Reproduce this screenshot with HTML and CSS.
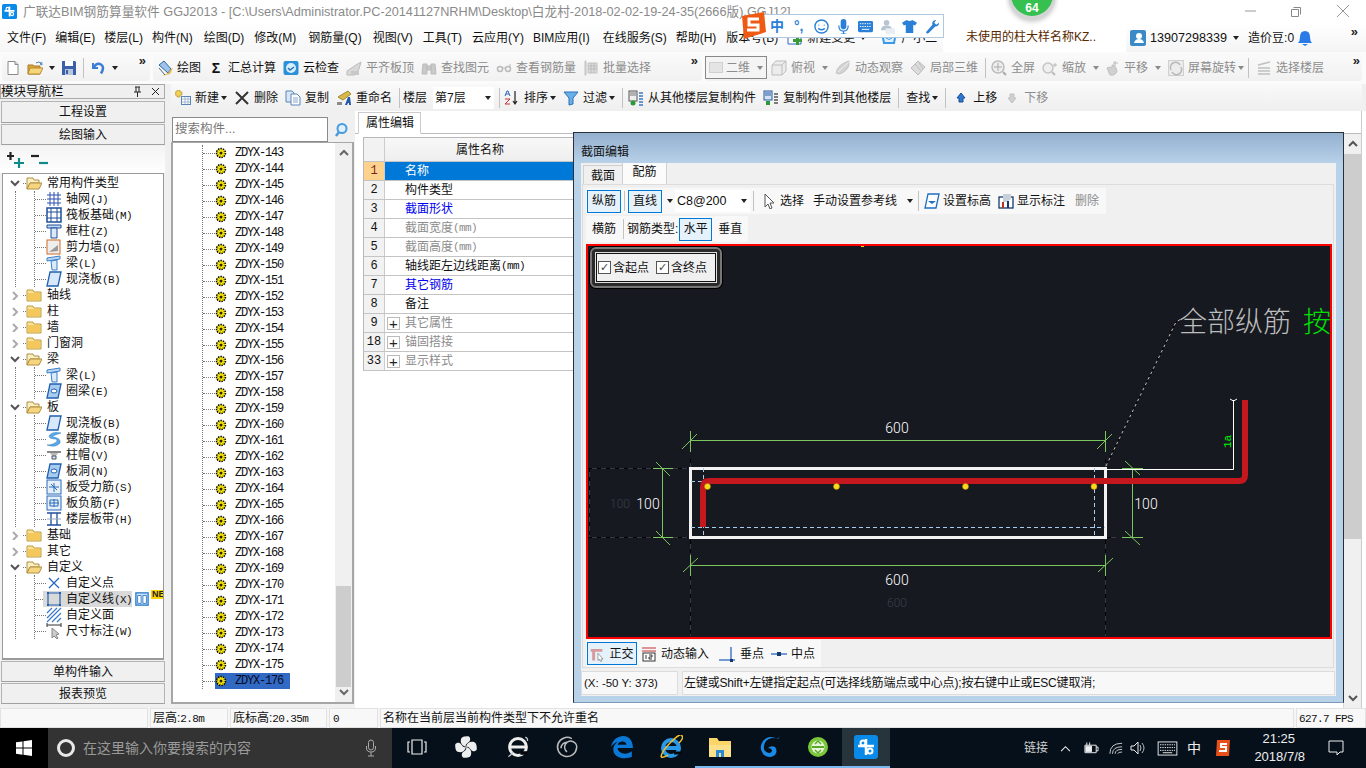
FILE: index.html
```html
<!DOCTYPE html>
<html lang="zh-CN">
<head>
<meta charset="utf-8">
<title>广联达BIM钢筋算量软件 GGJ2013</title>
<link rel="stylesheet" href="styles.css">
</head>
<body>
<svg class="sprite" aria-hidden="true">
  <symbol id="i-new" viewBox="0 0 16 16"><path d="M3 1.5h7l3 3v10H3z" fill="#fff" stroke="#8a8a8a"/><path d="M10 1.5v3h3" fill="#ddd" stroke="#8a8a8a"/></symbol>
  <symbol id="i-open" viewBox="0 0 16 16"><path d="M1 5h5l1 1h6v8H1z" fill="#d9a63a" stroke="#a9782a"/><path d="M3 8h13l-3 6H1z" fill="#f6d67a" stroke="#b98a30"/><path d="M9 3q3-2 5 0l-1 1 2 1-.3-3" fill="none" stroke="#4a82c0"/></symbol>
  <symbol id="i-save" viewBox="0 0 16 16"><path d="M1 1h13l1 1v13H1z" fill="#3b5fa8"/><path d="M4 1h8v5H4z" fill="#fff"/><path d="M4 9h8v6H4z" fill="#b7c6df"/><path d="M5 10h2v4H5z" fill="#3b5fa8"/></symbol>
  <symbol id="i-undo" viewBox="0 0 16 16"><path d="M3 3v5h5" fill="none" stroke="#3a7fd5" stroke-width="2"/><path d="M3.5 7.5Q7 2 11 4.500t0 9" fill="none" stroke="#3a7fd5" stroke-width="2.500"/></symbol>
  <symbol id="i-draw" viewBox="0 0 16 16"><path d="M2 5l5-4 7 8-3 4z" fill="#9ec3ea" stroke="#32669e"/><path d="M11 13l3-4 2-1-3 6-8 2z" fill="#e5b64a"/><path d="M2 8l6 7" stroke="#567" fill="none"/></symbol>
  <symbol id="i-cloud" viewBox="0 0 16 16"><rect x="0.500" y="1" width="15" height="14" rx="2" fill="#2a90d8"/><circle cx="8" cy="8" r="5" fill="#d7eefc"/><path d="M5 8l2 2 4-3" fill="none" stroke="#2a70b8" stroke-width="1.500"/></symbol>
  <symbol id="i-flush" viewBox="0 0 16 16"><path d="M1 11l9-6 5-3-2 7-4 6H1z" fill="#d8d8d8" stroke="#bbb"/><path d="M5 11h8v4H5z" fill="#c8c8c8"/></symbol>
  <symbol id="i-binoc" viewBox="0 0 16 16"><path d="M2 4h4v10H1zM10 4h4l1 10h-5zM6 6h4v4H6z" fill="#c9c9c9" stroke="#bbb"/></symbol>
  <symbol id="i-glass" viewBox="0 0 16 16"><circle cx="4" cy="9" r="2.500" fill="none" stroke="#bbb" stroke-width="1.500"/><circle cx="12" cy="9" r="2.500" fill="none" stroke="#bbb" stroke-width="1.500"/><path d="M6 8h4M14 8V4" stroke="#bbb" fill="none"/></symbol>
  <symbol id="i-batch" viewBox="0 0 16 16"><path d="M2 1h1v14H2zM5 3h9v10H5z" fill="#dcdcdc" stroke="#c2c2c2"/><path d="M5 6h9M5 9h9M8 3v10M11 3v10" stroke="#bbb"/></symbol>
  <symbol id="i-cube" viewBox="0 0 16 16"><path d="M1 5l4-4h10v10l-4 4H1zM1 5h10v10M11 5l4-4" fill="#ececec" stroke="#bdbdbd"/></symbol>
  <symbol id="i-orbit" viewBox="0 0 16 16"><path d="M1 13Q3 4 14 1q1 8-7 12-3 2-6 0z" fill="#d3d3d3" stroke="#c4c4c4"/><path d="M3 12L14 2" stroke="#eee"/></symbol>
  <symbol id="i-part" viewBox="0 0 16 16"><path d="M1 8l7-7 7 6-7 8z" fill="#dcdcdc" stroke="#bbb"/><path d="M5 4l6 7M9 3l4 6" stroke="#bbb"/></symbol>
  <symbol id="i-zoomall" viewBox="0 0 16 16"><circle cx="7" cy="7" r="6" fill="#eee" stroke="#bbb" stroke-width="1.500"/><path d="M7 3v8M3 7h8" stroke="#aaa"/><path d="M12 12l3 3" stroke="#aaa" stroke-width="2"/></symbol>
  <symbol id="i-zoom" viewBox="0 0 16 16"><circle cx="6" cy="8" r="5" fill="#efefef" stroke="#c5c5c5" stroke-width="1.500"/><path d="M10 12l3 3" stroke="#bbb" stroke-width="2"/><path d="M13 3v4M11 5h4" stroke="#bbb"/></symbol>
  <symbol id="i-pan" viewBox="0 0 16 16"><path d="M3 8l3-1 2 1V5l2 0 2 3 1 4-3 3H6z" fill="#d0d0d0" stroke="#c0c0c0"/><path d="M11 1v5M9 3h5" stroke="#bbb"/></symbol>
  <symbol id="i-rotate" viewBox="0 0 16 16"><rect x="0.500" y="0.500" width="15" height="15" fill="#ececec" stroke="#d0d0d0"/><path d="M3 10a5 5 0 0 1 9-5M13 7a5 5 0 0 1-9 5" fill="none" stroke="#b8b8b8" stroke-width="1.500"/></symbol>
  <symbol id="i-floors" viewBox="0 0 16 16"><path d="M2 5l12-3M2 8h12M2 11h12M2 14h12" stroke="#c0c0c0" stroke-width="1.500" fill="none"/></symbol>
  <symbol id="i-add" viewBox="0 0 16 16"><path d="M2 0h3v2h2v3H5v2H2V5H0V2h2z" fill="#f4d25a" stroke="#a88a20" stroke-width=".6"/><rect x="6.500" y="6.500" width="9" height="8" fill="#fff" stroke="#5a84b8"/><path d="M7 9h8M7 12h8M10 7v7M13 7v7" stroke="#8aa8cc" stroke-width=".8"/></symbol>
  <symbol id="i-x" viewBox="0 0 16 16"><path d="M2 2l12 12M14 2L2 14" stroke="#333" stroke-width="2" fill="none"/></symbol>
  <symbol id="i-copy" viewBox="0 0 16 16"><path d="M1 1h6l2 2v9H1z" fill="#d8e6f6" stroke="#5a84b8"/><path d="M6 4h6l3 3v8H6z" fill="#fff" stroke="#5a84b8"/><path d="M8 8h5M8 10h5M8 12h5" stroke="#8aa8cc"/></symbol>
  <symbol id="i-rename" viewBox="0 0 16 16"><path d="M2 7l10-6 3 3-8 6z" fill="#d8b84a" stroke="#a08a30"/><path d="M1 12h5v3H1z" fill="#8a8a8a"/><path d="M9 15l3-8h2l1 8h-2v-2h-1l-1 2z" fill="#2456a8"/></symbol>
  <symbol id="i-sort" viewBox="0 0 16 16"><path d="M1 6l2-5h1l2 5M2 4h3" fill="none" stroke="#2a62c0"/><path d="M1 9h5L1 14h5" fill="none" stroke="#c03030"/><path d="M11 1v13M9 11l2 3 2-3" fill="none" stroke="#222" stroke-width="1.200"/></symbol>
  <symbol id="i-funnel" viewBox="0 0 16 16"><path d="M1 2h14L10 8v6l-4 1V8z" fill="#6ab0e8" stroke="#2a70b8"/></symbol>
  <symbol id="i-fromfl" viewBox="0 0 16 16"><rect x="1" y="1" width="8" height="10" fill="#eee" stroke="#555"/><path d="M2 3h6M2 5h6" stroke="#777"/><circle cx="5" cy="13" r="2.500" fill="#2a9a3a"/><path d="M11 3h4M11 6h4M11 9h4M11 12h4M11 15h4" stroke="#3a7ac0" stroke-width="1.500"/></symbol>
  <symbol id="i-tofl" viewBox="0 0 16 16"><rect x="1" y="1" width="8" height="9" fill="#cfe2f6" stroke="#2a5a9a"/><path d="M2 3h6M2 5h6" stroke="#2a5a9a"/><rect x="3" y="11" width="4" height="4" fill="#2a9a3a"/><path d="M11 4h4M11 7h4M11 10h4M11 13h4" stroke="#555" stroke-width="1.500"/></symbol>
  <symbol id="i-up" viewBox="0 0 16 16"><path d="M8 3l4 5h-2v4H6V8H4z" fill="#2a78d0" stroke="#1a4a98"/></symbol>
  <symbol id="i-down" viewBox="0 0 16 16"><path d="M8 13l4-5h-2V4H6v4H4z" fill="#cfcfcf" stroke="#c0c0c0"/></symbol>
  <symbol id="i-search" viewBox="0 0 16 16"><circle cx="9" cy="6.500" r="4.500" fill="#dff0fc" stroke="#4a9ade" stroke-width="2"/><path d="M6 10l-3 4" stroke="#4a9ade" stroke-width="2.500"/></symbol>
  <symbol id="i-plus" viewBox="0 0 18 16"><path d="M3.500 0v8M0 4h7" stroke="#222" stroke-width="2.200"/><path d="M12 6v10M7 11h10" stroke="#0f8a8a" stroke-width="2.200"/></symbol>
  <symbol id="i-minus" viewBox="0 0 18 16"><path d="M0 4h8" stroke="#222" stroke-width="2.200"/><path d="M8 11h9" stroke="#0f8a8a" stroke-width="2.200"/></symbol>
  <symbol id="i-fc" viewBox="0 0 16 16"><path d="M1 3h6l1 2h7v9H1z" fill="#fbe39a" stroke="#c09a3a"/><path d="M2 6h12v7H2z" fill="#f4c85a"/></symbol>
  <symbol id="i-fo" viewBox="0 0 16 16"><path d="M1 3h6l1 2h5v3H4l-3 6z" fill="#fbeec2" stroke="#b09040"/><path d="M4 8h12l-3 6H1z" fill="#f5d57f" stroke="#b09040"/></symbol>
  <symbol id="i-grid" viewBox="0 0 16 16"><path d="M1 4h14M1 8h14M1 12h14M4 1v14M8 1v14M12 1v14" stroke="#2a50b0"/></symbol>
  <symbol id="i-raft" viewBox="0 0 16 16"><rect x="1" y="1" width="14" height="14" fill="#fff" stroke="#1f4f9a" stroke-width="1.500"/><path d="M1 5h14M1 11h14M5 1v14M11 1v14" stroke="#1f4f9a"/></symbol>
  <symbol id="i-col" viewBox="0 0 16 16"><path d="M1 2h14v3H1z" fill="#c0d8f4" stroke="#1f4f9a"/><path d="M5 5h6v10H5z" fill="#dce9fa" stroke="#1f4f9a"/></symbol>
  <symbol id="i-wall" viewBox="0 0 16 16"><rect x="1" y="1" width="13" height="14" fill="#eee" stroke="#d06a20"/><path d="M3 13l9-1V6z" fill="#999"/></symbol>
  <symbol id="i-beam" viewBox="0 0 16 16"><path d="M1 3l13-2v3L1 6z" fill="#bcd8f4" stroke="#3a80c8"/><path d="M5 6l6-1v10H6z" fill="#dbeafa" stroke="#3a80c8"/></symbol>
  <symbol id="i-slab" viewBox="0 0 16 16"><path d="M4 1h11l-3 14H1z" fill="#d6e8fa" stroke="#1f5fb0" stroke-width="1.300"/></symbol>
  <symbol id="i-spiral" viewBox="0 0 16 16"><path d="M15 2Q6 0 3 5q0 3 7 3 3 2-3 5-3 1-6 1 9 3 13-2 1-5-7-6-2-1 8-4z" fill="#5aa8e8" stroke="#2a78c0" stroke-width=".5"/></symbol>
  <symbol id="i-cap" viewBox="0 0 16 16"><path d="M1 4h14v2H1z" fill="#888"/><path d="M4 6h8l-2 3H6z" fill="#bbb"/><path d="M6 9h4v3H6z" fill="#dce9fa" stroke="#456"/></symbol>
  <symbol id="i-hole" viewBox="0 0 16 16"><path d="M4 1h11l-3 14H1z" fill="#a8ccf0" stroke="#1f5fb0" stroke-width="1.300"/><ellipse cx="8" cy="8" rx="3" ry="2" fill="#fff" stroke="#1f5fb0"/></symbol>
  <symbol id="i-bar1" viewBox="0 0 16 16"><rect x="1" y="1" width="14" height="14" fill="#e4effa" stroke="#2a6ab8"/><path d="M3 8h10M8 4v9M5 5l6 6" stroke="#2a6ab8"/></symbol>
  <symbol id="i-bar2" viewBox="0 0 16 16"><rect x="1" y="1" width="14" height="14" fill="#e4effa" stroke="#2a6ab8"/><path d="M3 8h10M8 4v8M4 5h8v6H4z" fill="none" stroke="#2a6ab8"/></symbol>
  <symbol id="i-band" viewBox="0 0 16 16"><path d="M1 2h14M1 14h14M5 2v12M11 2v12" stroke="#1f4f9a" stroke-width="1.300" fill="none"/><path d="M1 8h14" stroke="#9ab"/></symbol>
  <symbol id="i-pt" viewBox="0 0 16 16"><path d="M3 3l10 10M13 3L3 13" stroke="#2a66c0" stroke-width="1.300"/></symbol>
  <symbol id="i-ln" viewBox="0 0 16 16"><path d="M2 2h12v12H2z" fill="none" stroke="#1f5fb0" stroke-width="1.200"/><path d="M1 1h2v2H1zM13 1h2v2h-2zM1 13h2v2H1zM13 13h2v2h-2z" fill="#1f5fb0"/></symbol>
  <symbol id="i-hatch" viewBox="0 0 16 16"><path d="M1 6l5-5M1 11L11 1M1 15L15 1M6 15l9-9M11 15l4-4" stroke="#3a7ac8" stroke-width="1.200"/></symbol>
  <symbol id="i-dim" viewBox="0 0 16 16"><path d="M1 2h14M1 0v4M15 0v4" stroke="#333"/><path d="M6 5v10l2-2 3 3 1-1-2-3 3-1z" fill="#ccc" stroke="#888"/></symbol>
  <symbol id="i-new2" viewBox="0 0 16 16"><rect x="1" y="1" width="14" height="14" fill="#cfe4f8" stroke="#2a78c8" stroke-width="1.500"/><path d="M3 4h4v9H3zM9 4h4v9H9z" fill="#fff" stroke="#2a78c8"/></symbol>
  <symbol id="i-gear" viewBox="0 0 12 12"><circle cx="6" cy="6" r="4.500" fill="#ffee00" stroke="#000" stroke-width="1.500" stroke-dasharray="1.500 1"/><circle cx="6" cy="6" r="1.500" fill="#222"/><circle cx="6" cy="6" r="3.200" fill="none" stroke="#222" stroke-width=".6" stroke-dasharray="1 1.500"/></symbol>
  <symbol id="i-cursor" viewBox="0 0 16 16"><path d="M4 1l9 9H9l2 5-2 1-2-5-3 3z" fill="#fff" stroke="#555"/></symbol>
  <symbol id="i-elev" viewBox="0 0 16 16"><path d="M4 1h11l-3 14H1z" fill="#fff" stroke="#1f6fc0" stroke-width="1.300"/><path d="M4 8h8l-4 3z" fill="#1f6fc0"/></symbol>
  <symbol id="i-label" viewBox="0 0 16 16"><rect x="1" y="4" width="14" height="11" fill="#fff" stroke="#123a70" stroke-width="1.300"/><path d="M5 1h8v5l-4 3H5z" fill="#c8d0dc"/><path d="M4 9h2v6H4z" fill="#c03020"/><path d="M9 8h2v7H9z" fill="#123a70"/></symbol>
  <symbol id="i-ortho" viewBox="0 0 22 20"><path d="M1 3h16v4H7v12H3V7H1z" fill="#d89a9a"/><path d="M11 9l7 8-3 0 1 3-2 0-1-3-2 2z" fill="#fff" stroke="#666" stroke-width=".8"/></symbol>
  <symbol id="i-dyn" viewBox="0 0 16 16"><path d="M1 2h14M1 5h14" stroke="#c03030"/><rect x="2" y="7" width="12" height="8" fill="#fff" stroke="#333"/><path d="M5 9v4M8 9h3v2H8v2h3" fill="none" stroke="#333"/></symbol>
  <symbol id="i-perp" viewBox="0 0 16 16"><path d="M0 14h16" stroke="#2a66c0" stroke-width="1.300"/><path d="M12 1v15" stroke="#2a66c0" stroke-width="1.300"/><rect x="11" y="13" width="3" height="3" fill="#123a70"/></symbol>
  <symbol id="i-mid" viewBox="0 0 16 16"><path d="M0 8h16" stroke="#2a66c0" stroke-width="1.300"/><rect x="6" y="6" width="4" height="4" fill="#123a70"/></symbol>
  <symbol id="i-user" viewBox="0 0 16 16"><rect width="16" height="16" rx="2" fill="#3a8ac8"/><circle cx="9" cy="6" r="3" fill="#fff"/><path d="M4 13q1-4 5-4t5 4z" fill="#fff"/></symbol>
  <symbol id="i-bell" viewBox="0 0 16 16"><path d="M8 1q5 0 5 6 0 4 2 6H1q2-2 2-6 0-6 5-6z" fill="#2a7ae8"/><path d="M5 14h6l-3 2z" fill="#2a7ae8"/></symbol>
  <symbol id="i-change" viewBox="0 0 16 16"><path d="M1 2h13v12H1z" fill="#fff" stroke="#2a6ac0"/><path d="M9 6h3v3h3v3h-3v3H9v-3H6V9h3z" fill="#3a9a3a"/></symbol>
  <symbol id="i-xiao" viewBox="0 0 16 16"><path d="M1 3h14l-2 10H3z" fill="#dff0fc" stroke="#3a9ae8" stroke-width="2"/><path d="M5 8q3 3 6 0" fill="none" stroke="#3a9ae8"/></symbol>
  <symbol id="t-pin" viewBox="0 0 20 20"><g fill="#eee"><path d="M10 10C6 9 5 6 6 3c1-2 4-2 6-2 2 1 2 4 0 5-1 1-3 2-2 4z"/><path d="M10 10c1-4 4-5 7-4 2 1 2 4 2 6-1 2-4 2-5 0-1-1-2-3-4-2z"/><path d="M10 10c4 1 5 4 4 7-1 2-4 2-6 2-2-1-2-4 0-5 1-1 3-2 2-4z"/><path d="M10 10c-1 4-4 5-7 4-2-1-2-4-2-6 1-2 4-2 5 0 1 1 2 3 4 2z"/></g></symbol>
  <symbol id="t-e" viewBox="0 0 20 20"><circle cx="10" cy="10" r="7" fill="none" stroke="#eee" stroke-width="2.500"/><path d="M3 10h14" stroke="#eee" stroke-width="2.500"/><path d="M12 15l6 0" stroke="#05090c" stroke-width="3"/><path d="M2 18q2-1 4-4M16 2q2 0 2 3" stroke="#ccc" fill="none"/></symbol>
  <symbol id="t-swirl" viewBox="0 0 20 20"><path d="M14 3a8 8 0 1 0 4 8 5 5 0 1 0-8 3M10 6a5 5 0 0 0-5 5" fill="none" stroke="#bbb" stroke-width="1.300"/></symbol>
  <symbol id="t-edge" viewBox="0 0 22 22"><path d="M1 11C2 4 8 1 12 1c6 0 9 5 9 11H7c0 5 8 7 13 3v5c-7 3-17 1-17-7 0-3 2-5 4-7-2 1-5 3-6 5zM7 9h8c0-4-7-4-8 0z" fill="#0a78d7"/></symbol>
  <symbol id="t-ie" viewBox="0 0 24 24"><circle cx="12" cy="13" r="8" fill="none" stroke="#2a9ae8" stroke-width="4"/><path d="M4 13h16" stroke="#2a9ae8" stroke-width="4"/><path d="M15 18h8" stroke="#05090c" stroke-width="3"/><path d="M2 22Q2 17 12 7t11-6q2 2-3 7M2 22q3 1 7-2" fill="none" stroke="#f0c030" stroke-width="1.500"/></symbol>
  <symbol id="t-folder" viewBox="0 0 24 24"><path d="M1 3h8l2 3h12v16H1z" fill="#fbd568"/><path d="M1 10h22v12H1z" fill="#fce08a"/><path d="M8 15h8v7H8z" fill="#2a8ad8"/><path d="M11 18h2v4h-2z" fill="#fce08a"/></symbol>
  <symbol id="t-g" viewBox="0 0 24 24"><path d="M20 4Q12-1 6 6 1 14 7 20q6 4 11 0 3-4 0-8-4-2-7 1 3 0 4 2 0 3-3 3-6-1-5-7 1-7 8-8 3 0 6 1 1-2 4-4z" fill="#1a8ae8"/></symbol>
  <symbol id="t-ge" viewBox="0 0 24 24"><circle cx="12" cy="12" r="10" fill="#7ac83a"/><circle cx="12" cy="12" r="6.500" fill="#e8f6d8"/><path d="M6 12h12" stroke="#5aa82a" stroke-width="2"/><path d="M9 9l3-3 3 3M9 15l3 3 3-3" fill="none" stroke="#5aa82a" stroke-width="1.500"/></symbol>
  <symbol id="t-glodon" viewBox="0 0 24 24"><rect width="24" height="24" rx="3" fill="#0a8ae8"/><path d="M12 4v16M4 11h16" stroke="#fff" stroke-width="2.500"/><circle cx="9" cy="8" r="2.500" fill="none" stroke="#fff" stroke-width="2"/><circle cx="16" cy="16" r="2.500" fill="none" stroke="#fff" stroke-width="2"/></symbol>
  <symbol id="t-s" viewBox="0 0 16 18"><path d="M2 1h13l-1 16H1z" fill="#e8501a"/><path d="M12 5H6v3h5v4H4" fill="none" stroke="#fff" stroke-width="2"/></symbol>
</svg>

<div class="app">
  <header class="titlebar">
    <svg class="ic ic-app"><use href="#t-glodon"/></svg>
    <span class="title-text">广联达BIM钢筋算量软件 GGJ2013 - [C:\Users\Administrator.PC-20141127NRHM\Desktop\白龙村-2018-02-02-19-24-35(2666版).GGJ12]</span>
    <div class="winctl">
      <svg class="wc"><path d="M1 6h11" stroke="#999"/></svg>
      <svg class="wc"><path d="M3.500 2.500h7v7M1.500 4.500h7v7h-7z" fill="none" stroke="#888"/></svg>
      <svg class="wc"><path d="M1 0l12 12M13 0L1 12" stroke="#999"/></svg>
    </div>
  </header>

  <nav class="menubar">
    <div class="menu-main">
      <span>文件(F)</span><span>编辑(E)</span><span>楼层(L)</span><span>构件(N)</span><span class="mg2">绘图(D)</span><span class="mg1">修改(M)</span><span class="mg3">钢筋量(Q)</span><span class="mg2">视图(V)</span><span class="mg1">工具(T)</span><span class="mg1">云应用(Y)</span><span>BIM应用(I)</span><span class="mg4">在线服务(S)</span><span>帮助(H)</span><span class="mg1">版本号(B)</span>
      <span class="tool"><svg class="ic"><use href="#i-change"/></svg>新建变更</span><i class="caret"></i>
      <span class="tool"><svg class="ic"><use href="#i-xiao"/></svg>广小二</span>
    </div>
    <div class="menu-notice">未使用的柱大样名称KZ..</div>
    <div class="menu-user">
      <svg class="ic"><use href="#i-user"/></svg><span class="phone">13907298339</span><i class="caret"></i><span class="beans">造价豆:0</span><svg class="ic"><use href="#i-bell"/></svg><span class="more">»</span>
    </div>
  </nav>

  <div class="toolbar">
    <div class="tb-sec sec1">
      <svg class="ic"><use href="#i-new"/></svg>
      <svg class="ic"><use href="#i-open"/></svg><i class="caret"></i>
      <svg class="ic"><use href="#i-save"/></svg>
      <i class="sep"></i>
      <svg class="ic"><use href="#i-undo"/></svg><i class="caret"></i>
      <span class="more">»</span>
    </div>
    <div class="tb-sec sec2">
      <span class="tool"><svg class="ic"><use href="#i-draw"/></svg>绘图</span>
      <span class="tool sigma-tool"><b class="sigma">Σ</b>汇总计算</span>
      <span class="tool"><svg class="ic"><use href="#i-cloud"/></svg>云检查</span>
      <span class="tool off"><svg class="ic"><use href="#i-flush"/></svg>平齐板顶</span>
      <span class="tool off"><svg class="ic"><use href="#i-binoc"/></svg>查找图元</span>
      <span class="tool off"><svg class="ic"><use href="#i-glass"/></svg>查看钢筋量</span>
      <span class="tool off"><svg class="ic"><use href="#i-batch"/></svg>批量选择</span>
      <span class="more">»</span>
    </div>
    <div class="tb-sec sec3">
      <div class="view-combo"><i class="view-swatch"></i><span>二维</span><i class="caret soft"></i></div>
      <span class="tool off"><svg class="ic"><use href="#i-cube"/></svg>俯视</span><i class="caret soft"></i>
      <span class="tool off"><svg class="ic"><use href="#i-orbit"/></svg>动态观察</span>
      <span class="tool off"><svg class="ic"><use href="#i-part"/></svg>局部三维</span>
      <i class="sep tight"></i>
      <span class="tool off"><svg class="ic"><use href="#i-zoomall"/></svg>全屏</span>
      <span class="tool off"><svg class="ic"><use href="#i-zoom"/></svg>缩放</span><i class="caret soft nudge"></i>
      <span class="tool off"><svg class="ic"><use href="#i-pan"/></svg>平移</span><i class="caret soft"></i>
      <span class="tool off"><svg class="ic"><use href="#i-rotate"/></svg>屏幕旋转</span><i class="caret soft hug"></i>
      <i class="sep n3"></i>
      <span class="tool off"><svg class="ic"><use href="#i-floors"/></svg>选择楼层</span>
      <span class="more">»</span>
    </div>
  </div>

  <div class="workspace">
    <aside class="nav">
      <div class="nav-head"><span>模块导航栏</span><span class="nav-btns"><svg class="pin"><path d="M3 1h5M4 1v5M7 1v5M2 6h7M5.500 6v5" stroke="#222" fill="none"/></svg><svg class="pin"><path d="M2 2l7 7M9 2L2 9" stroke="#222"/></svg></span></div>
      <button class="nav-btn">工程设置</button>
      <button class="nav-btn">绘图输入</button>
      <div class="nav-tools"><svg class="ic ic-exp"><use href="#i-plus"/></svg><svg class="ic ic-exp"><use href="#i-minus"/></svg></div>
      <div class="nav-tree">
        <div class="row fold"><svg class="chev"><path d="M1 2l4 4 4-4" stroke="#555" stroke-width="2" fill="none"/></svg><i class="stub"></i><svg class="ic"><use href="#i-fo"/></svg><span>常用构件类型</span></div>
        <div class="kids"><div class="kids-in">
          <div class="row"><i class="tick"></i><svg class="ic"><use href="#i-grid"/></svg><span>轴网<b class="m">(J)</b></span></div>
          <div class="row"><i class="tick"></i><svg class="ic"><use href="#i-raft"/></svg><span>筏板基础<b class="m">(M)</b></span></div>
          <div class="row"><i class="tick"></i><svg class="ic"><use href="#i-col"/></svg><span>框柱<b class="m">(Z)</b></span></div>
          <div class="row"><i class="tick"></i><svg class="ic"><use href="#i-wall"/></svg><span>剪力墙<b class="m">(Q)</b></span></div>
          <div class="row"><i class="tick"></i><svg class="ic"><use href="#i-beam"/></svg><span>梁<b class="m">(L)</b></span></div>
          <div class="row"><i class="tick"></i><svg class="ic"><use href="#i-slab"/></svg><span>现浇板<b class="m">(B)</b></span></div>
        </div></div>
        <div class="row fold"><svg class="chev"><path d="M3 1l4 4-4 4" stroke="#aaa" stroke-width="2" fill="none"/></svg><i class="stub"></i><svg class="ic"><use href="#i-fc"/></svg><span>轴线</span></div>
        <div class="row fold"><svg class="chev"><path d="M3 1l4 4-4 4" stroke="#aaa" stroke-width="2" fill="none"/></svg><i class="stub"></i><svg class="ic"><use href="#i-fc"/></svg><span>柱</span></div>
        <div class="row fold"><svg class="chev"><path d="M3 1l4 4-4 4" stroke="#aaa" stroke-width="2" fill="none"/></svg><i class="stub"></i><svg class="ic"><use href="#i-fc"/></svg><span>墙</span></div>
        <div class="row fold"><svg class="chev"><path d="M3 1l4 4-4 4" stroke="#aaa" stroke-width="2" fill="none"/></svg><i class="stub"></i><svg class="ic"><use href="#i-fc"/></svg><span>门窗洞</span></div>
        <div class="row fold"><svg class="chev"><path d="M1 2l4 4 4-4" stroke="#555" stroke-width="2" fill="none"/></svg><i class="stub"></i><svg class="ic"><use href="#i-fo"/></svg><span>梁</span></div>
        <div class="kids"><div class="kids-in">
          <div class="row"><i class="tick"></i><svg class="ic"><use href="#i-beam"/></svg><span>梁<b class="m">(L)</b></span></div>
          <div class="row"><i class="tick"></i><svg class="ic"><use href="#i-hole"/></svg><span>圈梁<b class="m">(E)</b></span></div>
        </div></div>
        <div class="row fold"><svg class="chev"><path d="M1 2l4 4 4-4" stroke="#555" stroke-width="2" fill="none"/></svg><i class="stub"></i><svg class="ic"><use href="#i-fo"/></svg><span>板</span></div>
        <div class="kids"><div class="kids-in">
          <div class="row"><i class="tick"></i><svg class="ic"><use href="#i-slab"/></svg><span>现浇板<b class="m">(B)</b></span></div>
          <div class="row"><i class="tick"></i><svg class="ic"><use href="#i-spiral"/></svg><span>螺旋板<b class="m">(B)</b></span></div>
          <div class="row"><i class="tick"></i><svg class="ic"><use href="#i-cap"/></svg><span>柱帽<b class="m">(V)</b></span></div>
          <div class="row"><i class="tick"></i><svg class="ic"><use href="#i-hole"/></svg><span>板洞<b class="m">(N)</b></span></div>
          <div class="row"><i class="tick"></i><svg class="ic"><use href="#i-bar1"/></svg><span>板受力筋<b class="m">(S)</b></span></div>
          <div class="row"><i class="tick"></i><svg class="ic"><use href="#i-bar2"/></svg><span>板负筋<b class="m">(F)</b></span></div>
          <div class="row"><i class="tick"></i><svg class="ic"><use href="#i-band"/></svg><span>楼层板带<b class="m">(H)</b></span></div>
        </div></div>
        <div class="row fold"><svg class="chev"><path d="M3 1l4 4-4 4" stroke="#aaa" stroke-width="2" fill="none"/></svg><i class="stub"></i><svg class="ic"><use href="#i-fc"/></svg><span>基础</span></div>
        <div class="row fold"><svg class="chev"><path d="M3 1l4 4-4 4" stroke="#aaa" stroke-width="2" fill="none"/></svg><i class="stub"></i><svg class="ic"><use href="#i-fc"/></svg><span>其它</span></div>
        <div class="row fold"><svg class="chev"><path d="M1 2l4 4 4-4" stroke="#555" stroke-width="2" fill="none"/></svg><i class="stub"></i><svg class="ic"><use href="#i-fo"/></svg><span>自定义</span></div>
        <div class="kids"><div class="kids-in">
          <div class="row"><i class="tick"></i><svg class="ic"><use href="#i-pt"/></svg><span>自定义点</span></div>
          <div class="row"><i class="tick short"></i><span class="hl"><svg class="ic"><use href="#i-ln"/></svg><span>自定义线<b class="m">(X)</b></span></span><svg class="ic new-ic"><use href="#i-new2"/></svg><span class="ne">NE</span></div>
          <div class="row"><i class="tick"></i><svg class="ic"><use href="#i-hatch"/></svg><span>自定义面</span></div>
          <div class="row"><i class="tick"></i><svg class="ic"><use href="#i-dim"/></svg><span>尺寸标注<b class="m">(W)</b></span></div>
        </div></div>
      </div>
      <button class="nav-btn">单构件输入</button>
      <button class="nav-btn">报表预览</button>
    </aside>

    <main class="center">
      <div class="tb2">
        <span class="tool"><svg class="ic"><use href="#i-add"/></svg>新建</span><i class="caret c2"></i>
        <span class="tool"><svg class="ic"><use href="#i-x"/></svg>删除</span>
        <span class="tool"><svg class="ic"><use href="#i-copy"/></svg>复制</span>
        <span class="tool"><svg class="ic"><use href="#i-rename"/></svg>重命名</span>
        <i class="sep s2"></i>
        <span>楼层</span>
        <div class="floor-combo"><span>第7层</span><i class="caret"></i></div>
        <i class="sep s3"></i>
        <span class="tool"><svg class="ic"><use href="#i-sort"/></svg>排序</span><i class="caret c2"></i>
        <span class="tool"><svg class="ic"><use href="#i-funnel"/></svg>过滤</span><i class="caret c2"></i>
        <i class="sep s6"></i>
        <span class="tool"><svg class="ic"><use href="#i-fromfl"/></svg>从其他楼层复制构件</span>
        <span class="tool"><svg class="ic"><use href="#i-tofl"/></svg>复制构件到其他楼层</span>
        <i class="sep"></i>
        <span>查找</span><i class="caret c2"></i>
        <i class="sep"></i>
        <span class="tool"><svg class="ic"><use href="#i-up"/></svg>上移</span>
        <span class="tool off"><svg class="ic"><use href="#i-down"/></svg>下移</span>
      </div>
      <div class="panes">
        <section class="comp">
          <div class="comp-search"><div class="search-input">搜索构件...</div><svg class="ic"><use href="#i-search"/></svg></div>
          <div class="comp-tree">
            <div class="comp-list"><div class="comp-in">
              <div class="row"><i class="tick t2"></i><svg class="gear"><use href="#i-gear"/></svg><span class="z">ZDYX-143</span></div>
              <div class="row"><i class="tick t2"></i><svg class="gear"><use href="#i-gear"/></svg><span class="z">ZDYX-144</span></div>
              <div class="row"><i class="tick t2"></i><svg class="gear"><use href="#i-gear"/></svg><span class="z">ZDYX-145</span></div>
              <div class="row"><i class="tick t2"></i><svg class="gear"><use href="#i-gear"/></svg><span class="z">ZDYX-146</span></div>
              <div class="row"><i class="tick t2"></i><svg class="gear"><use href="#i-gear"/></svg><span class="z">ZDYX-147</span></div>
              <div class="row"><i class="tick t2"></i><svg class="gear"><use href="#i-gear"/></svg><span class="z">ZDYX-148</span></div>
              <div class="row"><i class="tick t2"></i><svg class="gear"><use href="#i-gear"/></svg><span class="z">ZDYX-149</span></div>
              <div class="row"><i class="tick t2"></i><svg class="gear"><use href="#i-gear"/></svg><span class="z">ZDYX-150</span></div>
              <div class="row"><i class="tick t2"></i><svg class="gear"><use href="#i-gear"/></svg><span class="z">ZDYX-151</span></div>
              <div class="row"><i class="tick t2"></i><svg class="gear"><use href="#i-gear"/></svg><span class="z">ZDYX-152</span></div>
              <div class="row"><i class="tick t2"></i><svg class="gear"><use href="#i-gear"/></svg><span class="z">ZDYX-153</span></div>
              <div class="row"><i class="tick t2"></i><svg class="gear"><use href="#i-gear"/></svg><span class="z">ZDYX-154</span></div>
              <div class="row"><i class="tick t2"></i><svg class="gear"><use href="#i-gear"/></svg><span class="z">ZDYX-155</span></div>
              <div class="row"><i class="tick t2"></i><svg class="gear"><use href="#i-gear"/></svg><span class="z">ZDYX-156</span></div>
              <div class="row"><i class="tick t2"></i><svg class="gear"><use href="#i-gear"/></svg><span class="z">ZDYX-157</span></div>
              <div class="row"><i class="tick t2"></i><svg class="gear"><use href="#i-gear"/></svg><span class="z">ZDYX-158</span></div>
              <div class="row"><i class="tick t2"></i><svg class="gear"><use href="#i-gear"/></svg><span class="z">ZDYX-159</span></div>
              <div class="row"><i class="tick t2"></i><svg class="gear"><use href="#i-gear"/></svg><span class="z">ZDYX-160</span></div>
              <div class="row"><i class="tick t2"></i><svg class="gear"><use href="#i-gear"/></svg><span class="z">ZDYX-161</span></div>
              <div class="row"><i class="tick t2"></i><svg class="gear"><use href="#i-gear"/></svg><span class="z">ZDYX-162</span></div>
              <div class="row"><i class="tick t2"></i><svg class="gear"><use href="#i-gear"/></svg><span class="z">ZDYX-163</span></div>
              <div class="row"><i class="tick t2"></i><svg class="gear"><use href="#i-gear"/></svg><span class="z">ZDYX-164</span></div>
              <div class="row"><i class="tick t2"></i><svg class="gear"><use href="#i-gear"/></svg><span class="z">ZDYX-165</span></div>
              <div class="row"><i class="tick t2"></i><svg class="gear"><use href="#i-gear"/></svg><span class="z">ZDYX-166</span></div>
              <div class="row"><i class="tick t2"></i><svg class="gear"><use href="#i-gear"/></svg><span class="z">ZDYX-167</span></div>
              <div class="row"><i class="tick t2"></i><svg class="gear"><use href="#i-gear"/></svg><span class="z">ZDYX-168</span></div>
              <div class="row"><i class="tick t2"></i><svg class="gear"><use href="#i-gear"/></svg><span class="z">ZDYX-169</span></div>
              <div class="row"><i class="tick t2"></i><svg class="gear"><use href="#i-gear"/></svg><span class="z">ZDYX-170</span></div>
              <div class="row"><i class="tick t2"></i><svg class="gear"><use href="#i-gear"/></svg><span class="z">ZDYX-171</span></div>
              <div class="row"><i class="tick t2"></i><svg class="gear"><use href="#i-gear"/></svg><span class="z">ZDYX-172</span></div>
              <div class="row"><i class="tick t2"></i><svg class="gear"><use href="#i-gear"/></svg><span class="z">ZDYX-173</span></div>
              <div class="row"><i class="tick t2"></i><svg class="gear"><use href="#i-gear"/></svg><span class="z">ZDYX-174</span></div>
              <div class="row"><i class="tick t2"></i><svg class="gear"><use href="#i-gear"/></svg><span class="z">ZDYX-175</span></div>
              <div class="row"><i class="tick t2"></i><span class="comp-sel"><svg class="gear"><use href="#i-gear"/></svg><span class="z">ZDYX-176</span></span></div>
            </div></div>
            <div class="vscroll small">
              <svg class="sb-arrow"><path d="M2 7l4-4 4 4" stroke="#666" stroke-width="2" fill="none"/></svg>
              <div class="sb-track"><div class="sb-thumb t-comp"></div></div>
              <svg class="sb-arrow"><path d="M2 3l4 4 4-4" stroke="#666" stroke-width="2" fill="none"/></svg>
            </div>
          </div>
        </section>

        <section class="props">
          <div class="props-tabs"><span class="props-tab">属性编辑</span></div>
          <div class="props-body">
            <div class="grid-wrap">
              <div class="grid-row head"><span class="rh"></span><span class="gc">属性名称</span></div>
              <div class="grid-row sel"><span class="rh">1</span><span class="gc">名称</span></div>
              <div class="grid-row"><span class="rh">2</span><span class="gc">构件类型</span></div>
              <div class="grid-row"><span class="rh">3</span><span class="gc blue">截面形状</span></div>
              <div class="grid-row"><span class="rh">4</span><span class="gc gray">截面宽度<b class="m">(mm)</b></span></div>
              <div class="grid-row"><span class="rh">5</span><span class="gc gray">截面高度<b class="m">(mm)</b></span></div>
              <div class="grid-row"><span class="rh">6</span><span class="gc">轴线距左边线距离<b class="m">(mm)</b></span></div>
              <div class="grid-row"><span class="rh">7</span><span class="gc blue">其它钢筋</span></div>
              <div class="grid-row"><span class="rh">8</span><span class="gc">备注</span></div>
              <div class="grid-row"><span class="rh">9</span><span class="gc gray"><i class="plus">+</i>其它属性</span></div>
              <div class="grid-row"><span class="rh">18</span><span class="gc gray"><i class="plus">+</i>锚固搭接</span></div>
              <div class="grid-row"><span class="rh">33</span><span class="gc gray"><i class="plus">+</i>显示样式</span></div>
            </div>
            <div class="vscroll big">
              <svg class="sb-arrow"><path d="M2 7l4-4 4 4" stroke="#555" stroke-width="2" fill="none"/></svg>
              <div class="sb-track"><div class="sb-thumb t-props"></div></div>
              <svg class="sb-arrow"><path d="M2 3l4 4 4-4" stroke="#555" stroke-width="2" fill="none"/></svg>
            </div>
          </div>
        </section>
      </div>
    </main>
  </div>

  <footer class="statusbar">
    <span class="st s-a"></span><span class="st s-b">层高:<b class="m">2.8m</b></span><span class="st s-c">底标高:<b class="m">20.35m</b></span><span class="st s-d"><b class="m">0</b></span><span class="st s-e">名称在当前层当前构件类型下不允许重名</span><span class="st s-f"><b class="m">627.7 FPS</b></span>
  </footer>

  <div class="taskbar">
    <div class="start"><svg class="win" viewBox="0 0 16 16"><path d="M0 2.300l6.500-.9v6.200H0zM7.500 1.300L16 0v7.600H7.500zM0 8.500h6.500v6.200L0 13.800zM7.500 8.500H16V16l-8.500-1.200z" fill="#fff"/></svg></div>
    <div class="tsearch"><svg class="cortana"><circle cx="9" cy="9" r="7.500" fill="none" stroke="#e8e8e8" stroke-width="3"/></svg><span>在这里输入你要搜索的内容</span><svg class="tmic" viewBox="0 0 12 18"><rect x="3.500" y="1" width="5" height="10" rx="2.500" fill="none" stroke="#aaa"/><path d="M1.500 7v2q0 4 4.500 4t4.500-4V7M6 13v4M3 17h6" fill="none" stroke="#aaa"/></svg></div>
    <div class="tcell"><svg class="tv" viewBox="0 0 20 16"><path d="M5 1h10v14H5zM3 3H1v10h2M17 3h2v10h-2" fill="none" stroke="#eee" stroke-width="1.200"/></svg></div>
    <div class="tcell"><svg class="ti"><use href="#t-pin"/></svg></div>
    <div class="tcell gap3"><svg class="ti"><use href="#t-e"/></svg></div>
    <div class="tcell"><svg class="ti"><use href="#t-swirl"/></svg></div>
    <div class="tcell gap6"><svg class="ti"><use href="#t-edge"/></svg></div>
    <div class="tcell"><svg class="ti"><use href="#t-ie"/></svg></div>
    <div class="tcell run"><svg class="ti"><use href="#t-folder"/></svg></div>
    <div class="tcell run"><svg class="ti"><use href="#t-g"/></svg></div>
    <div class="tcell run"><svg class="ti"><use href="#t-ge"/></svg></div>
    <div class="tcell run active"><svg class="ti"><use href="#t-glodon"/></svg></div>
    <div class="tray">
      <span class="tray-link">链接</span>
      <svg class="ty t-caret" viewBox="0 0 12 8"><path d="M1 7l5-5 5 5" fill="none" stroke="#eee" stroke-width="1.200"/></svg>
      <svg class="ty t-bat" viewBox="0 0 16 12"><path d="M1 3h12v8H1zM13 5h2v4h-2" fill="none" stroke="#eee"/><path d="M2 4h6v6H2zM3 0v3M6 0v3" fill="#eee" stroke="#eee"/></svg>
      <svg class="ty t-wifi" viewBox="0 0 16 14"><path d="M1 13Q1 1 15 1M4 13q0-8 11-8M7 13q0-5 8-5M10 13q0-2 5-2" fill="none" stroke="#ddd"/></svg>
      <svg class="ty t-snd" viewBox="0 0 16 14"><path d="M1 5h3l4-4v12l-4-4H1z" fill="none" stroke="#eee"/><path d="M10 4q2 3 0 6M12 2q4 5 0 10" fill="none" stroke="#bbb"/></svg>
      <svg class="ty t-kbd" viewBox="0 0 22 16"><rect x="1" y="1" width="20" height="14" fill="none" stroke="#eee"/><path d="M3 4h16M3 7h16M3 10h16" stroke="#eee" stroke-dasharray="1.500 1"/><path d="M6 12.500h10" stroke="#eee"/></svg>
      <span class="tray-zh">中</span>
      <svg class="ty t-sg"><use href="#t-s"/></svg>
      <div class="clock"><span>21:25</span><span>2018/7/8</span></div>
      <svg class="ty t-note" viewBox="0 0 16 16"><path d="M1 1h14v11h-3l-3 3v-3H1z" fill="none" stroke="#eee"/></svg>
    </div>
  </div>

  <!-- floating dialog -->
  <section class="dialog">
    <div class="dlg-title">截面编辑</div>
    <div class="dlg-body">
      <div class="dlg-tabs"><span class="dtab">截面</span><span class="dtab on">配筋</span></div>
      <div class="dlg-pane">
        <div class="dtb1">
          <button class="dbtn">纵筋</button><i class="sep s4"></i><button class="dbtn">直线</button><i class="caret c5"></i>
          <div class="spec-combo"><span>C8@200</span><i class="caret"></i></div>
          <i class="sep s4"></i>
          <span class="tool g3 cur"><svg class="ic"><use href="#i-cursor"/></svg>选择</span>
          <span class="manual">手动设置参考线</span><i class="caret c6"></i>
          <i class="sep s5"></i>
          <span class="tool g3"><svg class="ic"><use href="#i-elev"/></svg>设置标高</span>
          <span class="tool g3 t8"><svg class="ic"><use href="#i-label"/></svg>显示标注</span>
          <span class="off del">删除</span>
        </div>
        <div class="dtb2">
          <span>横筋</span><i class="sep s7"></i><span>钢筋类型:</span><button class="dbtn w33">水平</button><span class="vert">垂直</span>
        </div>
        <div class="cad">
          <svg class="cad-svg" viewBox="588 246 742 391">
            <rect x="861" y="246" width="3" height="1" fill="#ffd51a"/>
            <g class="ghost">
              <path d="M588 468.500H688M588 537.500H688M589.500 468V538M690.500 459V467M690.500 540V636M1105.500 459V467M1105.500 540V636M1107 537.500H1116"/>
            </g>
            <g class="ghost2">
              <path d="M588 468.500H688M588 537.500H688M589.500 468V538M690.500 459V467M690.500 540V636M1105.500 459V467M1105.500 540V636M1107 537.500H1116"/>
            </g>
            <path class="leader" d="M1106 466L1176 322L1181 319"/>
            <path class="leader2" d="M1106 466L1176 322L1181 319"/>
            <g class="dimg">
              <path d="M690.500 440.500H1105.500M690.500 431V452M1105.500 431V452M682 449L697 434M1097 449L1112 434"/>
              <path d="M690.500 565.500H1105.500M690.500 555V576M1105.500 555V576M683 572L698 558M1098 572L1113 558"/>
              <path d="M662.500 468V537M653 468.500H673M653 537.500H673M656 462L670 476M656 531L670 545"/>
              <path d="M1132.500 468V537M1122 468.500H1143M1122 537.500H1143M1125 461L1140 475M1125 531L1140 545"/>
            </g>
            <rect class="outline" x="690.500" y="468.500" width="415" height="69"/>
            <path class="bluedash" d="M691 527.500H1105M703.500 468V537M1094.500 468V537M691 481.500H703"/>
            <path class="rebar" d="M703 527V487Q703 481 709 481H1239Q1245 481 1245 475V400"/>
            <g class="dot"><circle cx="707.500" cy="486.500" r="3"/><circle cx="836.500" cy="486.500" r="3"/><circle cx="965.500" cy="486.500" r="3"/><circle cx="1094" cy="486.500" r="3"/></g>
            <path class="whiteln" d="M1106 469.500H1233.500V400M1230 399L1233.500 401L1237 399"/>
            <text class="t-la" transform="translate(1231 448) rotate(-90)">1a</text>
            <text class="t-dim" x="897" y="433">600</text>
            <text class="t-dim" x="897" y="585">600</text>
            <text class="t-dim" x="648" y="509">100</text>
            <text class="t-dim" x="1146" y="509">100</text>
            <text class="t-ghost" x="897" y="607">600</text>
            <text class="t-ghost" x="620" y="508">100</text>
            <text class="t-big" x="1179" y="332">全部纵筋</text>
            <text class="t-big g" x="1303" y="332">按</text>
          </svg>
          <div class="cad-opts"><div class="cad-opts-in">
            <label class="chk"><i class="box">✓</i>含起点</label>
            <label class="chk"><i class="box">✓</i>含终点</label>
          </div></div>
        </div>
        <div class="dtb3">
          <span class="ortho"><svg class="ic"><use href="#i-ortho"/></svg>正交</span>
          <span class="tool"><svg class="ic"><use href="#i-dyn"/></svg>动态输入</span>
          <span class="tool w-p"><svg class="ic"><use href="#i-perp"/></svg>垂点</span>
          <span class="tool w-m"><svg class="ic"><use href="#i-mid"/></svg>中点</span>
        </div>
      </div>
      <div class="dlg-status"><span class="ds coord">(X: -50 Y: 373)</span><span class="ds hint">左键或Shift+左键指定起点(可选择线筋端点或中心点);按右键中止或ESC键取消;</span></div>
    </div>
  </section>

  <!-- floating desktop widgets -->
  <div class="ball"><span>64</span></div>
  <div class="ime">
    <svg class="ime-s" viewBox="0 0 28 28"><path d="M4 5l22-4 2 20-22 7z" fill="#ee5a14"/><path d="M21 8H11v6h9v5H9" fill="none" stroke="#fff" stroke-width="3"/></svg>
    <span class="ime-zh">中</span>
    <span class="ime-punc">°,</span>
    <svg class="ime-i" viewBox="0 0 16 16"><circle cx="8" cy="8" r="7" fill="none" stroke="#2a80d8" stroke-width="1.500"/><path d="M5 6v1M11 6v1M4.500 10q3.500 3 7 0" fill="none" stroke="#2a80d8" stroke-width="1.500"/></svg>
    <svg class="ime-i" viewBox="0 0 16 16"><rect x="5" y="0" width="6" height="11" rx="3" fill="#2a80d8"/><path d="M3 7q0 6 5 6t5-6M8 13v3M5 16h6" fill="none" stroke="#2a80d8" stroke-width="1.300"/></svg>
    <svg class="ime-i" viewBox="0 0 16 16"><rect y="2" width="16" height="12" rx="1.500" fill="#2a80d8"/><path d="M2 5h12M2 8h12" stroke="#fff" stroke-dasharray="1.500 1"/><path d="M4 11h8" stroke="#fff"/></svg>
    <svg class="ime-i" viewBox="0 0 16 16"><circle cx="7" cy="4" r="3" fill="#b8c4d0"/><path d="M1 12q0-5 6-5t6 5z" fill="#b8c4d0"/><rect x="6" y="10" width="10" height="6" fill="#e8eef4"/></svg>
    <svg class="ime-i" viewBox="0 0 16 16"><path d="M5 1L0 4l2 3 2-1v9h8V6l2 1 2-3-5-3q-3 2-6 0z" fill="#2a80d8"/></svg>
    <svg class="ime-i" viewBox="0 0 16 16"><path d="M2 14L9 6q-1-4 3-5l1 0-2 3 2 2 3-2q0 4-4 4L5 15q-2 1-3-1z" fill="#2a80d8"/></svg>
  </div>
</div>
</body>
</html>
```

FILE: styles.css
```css
* { box-sizing: border-box; }
html, body { margin: 0; padding: 0; }
body { width: 1366px; height: 768px; overflow: hidden; background: #fff; color: #111;
  font: 12px/16px "Liberation Sans", "Noto Sans CJK SC", sans-serif; }
.sprite { width: 0; height: 0; display: block; overflow: hidden; }
.app { position: relative; width: 1366px; height: 768px; display: flex; flex-direction: column; overflow: hidden; background: #fbfbfb; }
button { font: inherit; color: inherit; padding: 0; margin: 0; background: none; }
i { font-style: normal; }
b { font-weight: normal; }
.m { font: 11px/16px "Liberation Mono", monospace; letter-spacing: -.6px; }
.ic { width: 16px; height: 16px; flex: none; display: block; }
.tool { display: inline-flex; align-items: center; gap: 4px; white-space: nowrap; }
.off { color: #8c8c8c; }
.caret { width: 0; height: 0; flex: none; border-style: solid; border-width: 4px 3px 0; border-color: #222 transparent transparent; }
.caret.soft { border-top-color: #8a8a8a; }
.sep { width: 1px; height: 20px; flex: none; background: #c2c2c2; }
.more { font: 13px/14px "Liberation Sans", sans-serif; font-weight: 700; color: #222; margin-left: auto; align-self: flex-start; }

/* title */
.titlebar { height: 23px; flex: none; background: #fff; display: flex; align-items: center; padding-left: 2px; }
.ic-app { width: 15px; height: 15px; margin-right: 6px; }
.title-text { color: #8a8a8a; font-size: 12.700px; white-space: nowrap; }
.winctl { margin-left: auto; display: flex; gap: 32px; padding-right: 16px; }
.wc { width: 14px; height: 13px; display: block; }

/* menu */
.menubar { height: 29px; flex: none; display: flex; margin-bottom: 2px; background: #fbfbfb; }
.menu-main { width: 943px; display: flex; align-items: center; gap: 9px; padding-left: 7px; background: linear-gradient(#fff, #f6f6f6); white-space: nowrap; overflow: hidden; }
.mg1 { margin-left: 1px; }
.mg2 { margin-left: 2px; }
.mg3 { margin-left: 3px; }
.mg4 { margin-left: 4px; }
.menu-main .caret { margin: 0 6px 0 -4px; }
.menu-notice { width: 183px; padding-left: 23px; line-height: 29px; color: #5a2a00; background: #fff; white-space: nowrap; }
.menu-user { width: 240px; display: flex; align-items: center; padding: 0 8px 0 4px; background: linear-gradient(#fff, #f4f4f4); }
.phone { font-size: 12.600px; margin-left: 4px; }
.menu-user .caret { margin-left: 6px; }
.beans { margin-left: 9px; }
.menu-user .ic { flex: none; }
.menu-user .ic:nth-of-type(2) { margin-left: 3px; }
.menu-user .more { margin-top: 2px; }

/* toolbar */
.toolbar { height: 30px; flex: none; display: flex; gap: 3px; padding: 0 4px 3px 2px; background: #fbfbfb; }
.tb-sec { display: flex; align-items: center; gap: 7px; background: linear-gradient(#fafafa, #f1f1f1); border-radius: 3px; }
.sec1 { width: 148px; padding: 0 4px 0 3px; gap: 6px; }
.sec2 { width: 549px; padding: 0 4px; }
.sec3 { flex: 1; padding-right: 2px; }
.sigma-tool { margin-left: 3px; gap: 7px; }
.sigma { width: 10px; font: 700 14px/16px "Liberation Sans", sans-serif; text-align: center; }
.view-combo { width: 62px; height: 23px; flex: none; margin-right: -3px; border: 1px solid #888; display: flex; align-items: center; padding: 0 3px; color: #8c8c8c; background: #f4f4f4; gap: 3px; white-space: nowrap; }
.view-swatch { width: 14px; height: 11px; flex: none; background: #e4e4e4; border: 1px solid #d0d0d0; }
.view-combo .caret { margin-left: auto; }
.sep.tight { margin: 0 -2px 0 0; }
.hug { margin-left: -5px; }
.nudge { margin-right: -2px; }
.sep.n3 { margin-left: -3px; }

/* workspace */
.workspace { height: 624px; flex: none; display: flex; background: #f0f0f0; }
.nav { width: 165px; flex: none; display: flex; flex-direction: column; gap: 1px; }
.nav-head { height: 15px; display: flex; justify-content: space-between; align-items: center; border: 1px solid #a9a9a9; font-size: 12.500px; background: #efefef; }
.nav-btns { display: flex; gap: 7px; padding-right: 3px; }
.pin { width: 11px; height: 11px; display: block; }
.nav-btn { height: 21px; border: 1px solid #b4b4b4; border-bottom: 1px solid #a0a0a0; background: #f0f0f0; text-align: center; flex: none; margin-left: 1px; }
.nav-head + .nav-btn { margin-top: 1px; height: 22px; }
.nav-tools { height: 27px; flex: none; display: flex; align-items: center; gap: 6px; padding-left: 7px; background: linear-gradient(#f4f4f4, #fff); }
.ic-exp { width: 18px; }
.nav-tree { height: 487px; flex: none; margin: -1px 1px 0 2px; border: 1px solid #9a9a9a; border-bottom: 2px solid #9a9a9a; background: #fff; padding-top: 1px; overflow: hidden; }
.row { height: 16px; display: flex; align-items: center; white-space: nowrap; }
.fold { padding-left: 7px; }
.chev { width: 10px; height: 9px; flex: none; display: block; }
.stub { width: 3px; margin: 0 0 0 3px; border-top: 1px dotted #777; flex: none; }
.fold .ic { margin-right: 5px; }
.kids { margin: 0 0 0 12px; border-left: 1px dotted #777; padding-left: 18px; }
.kids-in { border-left: 1px dotted #777; margin-bottom: 8px; }
.kids-in .row:last-child { margin-bottom: -8px; }
.tick { width: 11px; flex: none; border-top: 1px dotted #777; }
.tick.short { width: 8px; }
.kids-in .row > .ic { margin-right: 4px; }
.hl { display: flex; align-items: center; gap: 4px; background: #d9d9d9; height: 16px; padding-left: 3px; }
.kids-in .row > .new-ic { margin-left: 3px; margin-right: 2px; width: 14px; height: 14px; }
.ne { font: 700 9px/9px "Liberation Sans", sans-serif; background: #ffd500; color: #222; height: 9px; padding: 0 1px; align-self: flex-start; margin-top: -1px; }

/* center */
.center { flex: 1; display: flex; flex-direction: column; min-width: 0; }
.tb2 { height: 27px; flex: none; margin: 0 4px 0 6px; padding-left: 4px; display: flex; align-items: center; gap: 7px; background: linear-gradient(#f9f9f9, #efefef); white-space: nowrap; }
.c2 { margin-left: -5px; }
.s2 { margin-right: -4px; }
.s6 { margin-right: -2px; }
.floor-combo { width: 61px; height: 22px; margin-left: -1px; display: flex; align-items: center; justify-content: space-between; padding: 0 3px 0 2px; background: #fff; }
.s3 { margin: 0 -3px 0 -2px; }
.panes { flex: 1; display: flex; min-height: 0; background: #fff; }
.comp { width: 190px; flex: none; padding: 6px 0 4px 6px; background: #f0f0f0; display: flex; flex-direction: column; }
.comp-search { height: 25px; flex: none; display: flex; align-items: center; gap: 5px; margin-left: 1px; }
.search-input { width: 156px; height: 25px; border: 1px solid #8a8a8a; background: #fff; color: #777; line-height: 23px; padding-left: 2px; font-size: 12.500px; }
.comp-tree { flex: 1; display: flex; border: 2px solid #a6a6a6; border-top-width: 1px; margin-right: 1px; background: #fff; min-height: 0; overflow: hidden; }
.comp-list { flex: 1; padding: 2px 0 0 29px; min-width: 0; }
.comp-in { border-left: 1px dotted #777; margin-bottom: 8px; }
.comp-in .row:last-child { margin-bottom: -8px; }
.t2 { width: 12px; }
.gear { width: 12px; height: 12px; flex: none; display: block; }
.z { font: 12px/16px "Liberation Mono", monospace; letter-spacing: -1.200px; margin-left: 8px; }
.comp-sel { display: flex; align-items: center; background: #316ac5; height: 16px; width: 75px; color: #0a0a24; }
.vscroll { flex: none; display: flex; flex-direction: column; align-items: center; background: #f0f0f0; }
.vscroll.small { width: 17px; }
.vscroll.big { width: 18px; border-left: 1px solid #d8d8d8; }
.sb-arrow { width: 12px; height: 10px; flex: none; display: block; margin: 5px 0; }
.sb-track { flex: 1; width: 100%; min-height: 0; }
.sb-thumb { background: #cdcdcd; }
.t-comp { margin-top: 423px; height: 101px; width: 15px; margin-left: 1px; }
.t-props { margin-top: 0; height: 385px; }

/* props */
.props { flex: 1; min-width: 0; display: flex; flex-direction: column; padding-top: 1px; margin-right: 4px; border-right: 1px solid #ccc; }
.props-tabs { height: 22px; flex: none; border-bottom: 1px solid #bbb; padding-left: 3px; background: #fff; }
.props-tab { display: block; height: 22px; width: 63px; border: 1px solid #ccc; border-bottom: 1px solid #fff; text-align: left; padding-left: 7px; line-height: 21px; background: #fff; }
.props-body { flex: 1; display: flex; min-height: 0; }
.grid-wrap { flex: 1; min-width: 0; padding: 3px 0 0 8px; }
.grid-row { height: 19px; display: flex; border-bottom: 1px solid #c4c4c4; border-left: 1px solid #b8b8b8; }
.grid-row.head { height: 25px; background: linear-gradient(#f8f8f8, #eeeeee); border-top: 1px solid #b8b8b8; }
.rh { width: 21px; flex: none; background: #f2f2f2; border-right: 1px solid #ccc; text-align: center; line-height: 18px; font-family: "Liberation Mono", monospace; font-size: 12px; }
.gc { flex: 1; padding-left: 20px; line-height: 18px; white-space: nowrap; display: flex; align-items: center; }
.head .gc { padding-left: 71px; line-height: 24px; }
.sel .rh { background: #fdd28c; color: #7a1e1e; }
.sel .gc { background: #0078d7; color: #fff; }
.blue { color: #0000ee; }
.gray { color: #8c8c8c; }
.plus { width: 13px; height: 13px; margin: 0 5px 0 -18px; border: 1px solid #bbb; color: #222; font: 15px/11px "Liberation Sans", sans-serif; text-align: center; flex: none; background: #fff; }

/* status */
.statusbar { height: 20px; flex: none; display: flex; gap: 2px; background: #f5f5f5; }
.st { border: 1px solid #e2e2e2; padding-left: 2px; line-height: 19px; white-space: nowrap; background: #f8f8f8; }
.s-a { width: 148px; }
.s-b { width: 78px; }
.s-c { width: 97px; }
.s-d { width: 49px; padding-left: 3px; }
.s-e { flex: 1; }
.s-f { width: 70px; }

/* taskbar */
.taskbar { height: 40px; flex: none; display: flex; align-items: stretch; background: #06101a; color: #eee; }
.start { width: 48px; flex: none; background: #000; display: flex; align-items: center; justify-content: center; }
.win { width: 16px; height: 16px; display: block; }
.tsearch { width: 344px; flex: none; background: #333; display: flex; align-items: center; padding-left: 9px; color: #9a9a9a; font-size: 14px; }
.cortana { width: 18px; height: 18px; margin-right: 8px; flex: none; }
.tmic { width: 12px; height: 18px; margin-left: auto; margin-right: 15px; flex: none; }
.tcell { width: 49px; flex: none; display: flex; align-items: center; justify-content: center; border-bottom: 2px solid transparent; }
.tv { width: 20px; height: 16px; }
.ti { width: 24px; height: 24px; display: block; }
.gap3 { margin-left: 3px; }
.gap6 { margin-left: 6px; }
.run { border-bottom-color: #7ab8f0; background-clip: padding-box; }
.active { width: 48px; background-color: #27343c; }
.tray { display: flex; align-items: center; flex: 1; min-width: 0; }
.tray-link { margin-left: 134px; color: #d0d0d0; width: 24px; white-space: nowrap; }
.ty { flex: none; display: block; }
.t-caret { width: 11px; height: 7px; margin-left: 12px; }
.t-bat { width: 15px; height: 12px; margin-left: 13px; }
.t-wifi { width: 14px; height: 13px; margin-left: 10px; }
.t-snd { width: 16px; height: 14px; margin-left: 7px; }
.t-kbd { width: 21px; height: 15px; margin-left: 11px; }
.tray-zh { margin-left: 9px; font-size: 14px; width: 14px; }
.t-sg { width: 16px; height: 18px; margin-left: 14px; }
.clock { display: flex; flex-direction: column; align-items: flex-end; width: 62px; margin-left: 12px; line-height: 18px; font-size: 13px; }
.clock span:first-child { margin-right: 10px; }
.t-note { width: 16px; height: 16px; margin-left: 23px; }

/* dialog */
.dialog { position: absolute; left: 573px; top: 132px; width: 771px; height: 571px; border: 1px solid #2a3038; border-bottom: 1px solid #7a9ab8; background: #b8d2ea; display: flex; flex-direction: column; padding: 0 7px 6px; }
.dlg-title { height: 30px; flex: none; margin: 0 -7px; padding: 11px 0 0 7px; background: linear-gradient(#93b0cf, #b8d1e9); line-height: 16px; }
.dlg-body { flex: 1; display: flex; flex-direction: column; background: #f0f0f0; min-height: 0; }
.dlg-tabs { height: 21px; flex: none; display: flex; align-items: flex-end; padding-left: 2px; }
.dtab { width: 40px; height: 19px; text-align: center; line-height: 20px; border: 1px solid #d0d0d0; border-bottom: 0; background: #f0f0f0; }
.dtab.on { width: 45px; height: 21px; background: #fbfbfb; border-right: 1px solid #d0d0d0; border-top: 0; line-height: 19px; margin-left: -1px; }
.dlg-pane { height: 484px; flex: none; margin: 0 2px 0 1px; border: 1px solid #dcdcdc; background: #f0f0f0; padding: 3px 0 0 3px; display: flex; flex-direction: column; }
.dtb1 { height: 26px; flex: none; width: 520px; display: flex; align-items: center; gap: 5px; padding-left: 1px; background: #f8f8f8; white-space: nowrap; }
.dbtn { width: 34px; height: 23px; border: 1px solid #0078d7; background: #e5f1fb; flex: none; }
.s4 { margin: 0 -2px; }
.c5 { margin: 0 -3px 0 0; }
.spec-combo { width: 75px; height: 22px; display: flex; align-items: center; justify-content: space-between; background: #fff; padding: 0 3px 0 2px; flex: none; font-size: 12.500px; }
.g3 { gap: 3px; }
.cur { margin-left: 4px; }
.manual { margin-left: 4px; }
.c6 { margin: 0 0 0 5px; }
.s5 { margin: 0; }
.t8 { margin-left: 2px; }
.del { margin-left: 5px; }
.dtb2 { height: 26px; flex: none; margin: 2px 0; width: 162px; display: flex; align-items: center; gap: 5px; padding-left: 6px; background: #f8f8f8; white-space: nowrap; }
.s7 { margin: 0 -2px 0 2px; }
.w33 { width: 33px; margin-left: -4px; }
.vert { margin-left: 1px; }
.cad { position: relative; width: 746px; height: 395px; flex: none; border: 2px solid #f00; background: #161920; overflow: hidden; }
.cad-svg { width: 742px; height: 391px; display: block; }
.ghost path { fill: none; stroke: #353a44; }
.ghost2 path { fill: none; stroke: #000; stroke-dasharray: 4 5; }
.leader { fill: none; stroke: #bbb; stroke-dasharray: 3 3; }
.leader2 { fill: none; stroke: #000; stroke-dasharray: 3 3; stroke-dashoffset: 3; }
.dimg path { fill: none; stroke: #7cc660; }
.outline { fill: none; stroke: #f2f2f2; stroke-width: 3; }
.bluedash { fill: none; stroke: #a8ccf0; stroke-dasharray: 4 3; }
.rebar { fill: none; stroke: #c4171e; stroke-width: 6; }
.dot circle { fill: #ffd81e; stroke: #a88a00; stroke-width: .5; }
.whiteln { fill: none; stroke: #fff; }
.t-la { font: 11px "Liberation Mono", monospace; fill: #0f0; }
.t-dim { font: 300 14px Roboto, sans-serif; fill: #fff; text-anchor: middle; }
.t-ghost { font: 300 12px Roboto, sans-serif; fill: #3a3e47; text-anchor: middle; }
.t-big { font: 300 28px "Noto Sans CJK SC", sans-serif; fill: #bdbdbd; }
.t-big.g { fill: #00e000; }
.cad-opts { position: absolute; left: 2px; top: 1px; width: 132px; height: 41px; background: #2a2a2a; border: 2px solid #777; border-radius: 6px; padding: 4px; box-shadow: 0 0 0 1px #000; }
.cad-opts-in { height: 29px; background: #f0f0f0; border: 1px solid #111; display: flex; align-items: center; gap: 7px; padding-left: 1px; outline: 1px solid #ddd; }
.chk { display: inline-flex; align-items: center; gap: 2px; white-space: nowrap; }
.box { width: 13px; height: 13px; border: 1px solid #555; font: 11px/11px "DejaVu Sans", sans-serif; color: #444; text-align: center; background: #fff; }
.dtb3 { height: 27px; flex: none; width: 235px; margin-top: 1px; display: flex; align-items: center; gap: 4px; padding-left: 1px; background: #f8f8f8; white-space: nowrap; }
.ortho { display: inline-flex; align-items: center; justify-content: center; gap: 3px; width: 50px; height: 23px; border: 1px solid #0078d7; background: #e5f1fb; }
.w-p { margin-left: 6px; gap: 5px; }
.w-m { margin-left: 3px; }
.dlg-status { height: 24px; flex: none; margin-top: 3px; display: flex; gap: 4px; }
.ds { border: 1px solid #dcdcdc; background: #f8f8f8; line-height: 22px; white-space: nowrap; padding-left: 2px; }
.coord { width: 97px; font-size: 11.500px; }
.hint { flex: 1; margin-right: 1px; letter-spacing: -.17px; padding-left: 1px; }

/* desktop widgets */
.ball { position: absolute; left: 1008px; top: -29px; width: 48px; height: 48px; border-radius: 50%; background: #35c04f; border: 3px solid #d4d4d4; color: #fff; display: flex; align-items: flex-end; justify-content: center; font: 700 12px/14px "Liberation Sans", sans-serif; padding-bottom: 1px; box-shadow: 0 3px 4px rgba(0,0,0,.2); }
.ime { position: absolute; left: 753px; top: 14px; width: 191px; height: 24px; border: 1px solid #b0c8de; background: #fff; display: flex; align-items: center; padding-left: 16px; color: #2a80d8; }
.ime-s { position: absolute; left: -16px; top: -4px; width: 28px; height: 28px; }
.ime-zh { font-weight: 700; font-size: 14px; width: 24px; flex: none; }
.ime-punc { font-weight: 700; font-size: 14px; width: 20px; flex: none; }
.ime-i { width: 15px; height: 15px; flex: none; margin-right: 7px; display: block; }
```
